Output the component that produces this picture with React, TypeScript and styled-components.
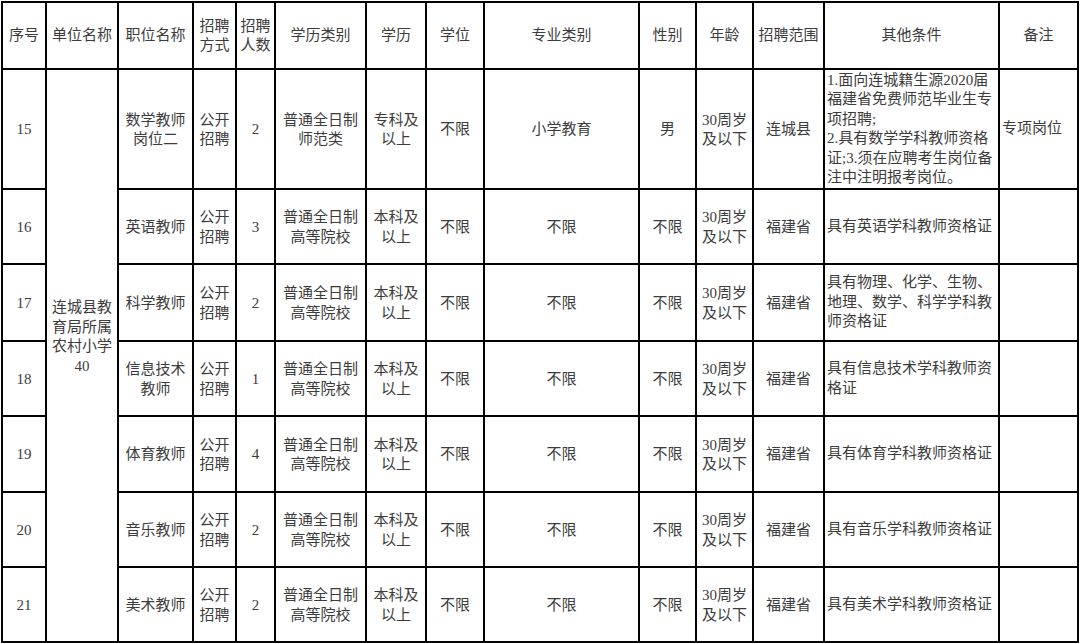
import React from 'react';
import styled, { createGlobalStyle } from 'styled-components';

const Global = createGlobalStyle`
  html, body { margin: 0; padding: 0; background: #ffffff; }
  body { font-family: "Liberation Serif", "Noto Sans CJK SC", serif; }
`;

const Table = styled.table`
  border-collapse: collapse;
  table-layout: fixed;
  width: 1077px;
  margin: 1px 0 0 1px;
  font-family: "Liberation Serif", "Noto Sans CJK SC", serif;
  font-size: 15px;
  line-height: 19.5px;
  color: #3c3c3c;
`;

const Col = styled.col<{ $w: number }>`
  width: ${(p) => p.$w}px;
`;

const Row = styled.tr<{ $h: number }>`
  height: ${(p) => p.$h}px;
`;

const HeadCell = styled.th`
  border: 2px solid #000;
  padding: 1px 1px 0;
  font-weight: normal;
  text-align: center;
  vertical-align: middle;
  white-space: nowrap;
`;

const Cell = styled.td<{ $left?: boolean }>`
  border: 2px solid #000;
  padding: ${(p) => (p.$left ? '0 2px' : '2px 1px 0')};
  text-align: ${(p) => (p.$left ? 'left' : 'center')};
  vertical-align: middle;
  white-space: nowrap;
`;

const UnitCell = styled(Cell)`
  padding-bottom: 39px;
`;

const cols = [44, 72, 75, 43, 39, 91, 60, 58, 155, 57, 57, 71, 175, 79];

const headers: string[][] = [
  ['序号'],
  ['单位名称'],
  ['职位名称'],
  ['招聘', '方式'],
  ['招聘', '人数'],
  ['学历类别'],
  ['学历'],
  ['学位'],
  ['专业类别'],
  ['性别'],
  ['年龄'],
  ['招聘范围'],
  ['其他条件'],
  ['备注'],
];

type RowData = {
  no: string;
  h: number;
  job: string[];
  count: string;
  eduType: string[];
  edu: string[];
  major: string;
  sex: string;
  scope: string;
  other: string[];
  note: string;
};

const rows: RowData[] = [
  {
    no: '15', h: 120, job: ['数学教师', '岗位二'], count: '2', eduType: ['普通全日制', '师范类'],
    edu: ['专科及', '以上'], major: '小学教育', sex: '男', scope: '连城县',
    other: ['1.面向连城籍生源2020届', '福建省免费师范毕业生专', '项招聘;', '2.具有数学学科教师资格', '证;3.须在应聘考生岗位备', '注中注明报考岗位。'],
    note: '专项岗位',
  },
  {
    no: '16', h: 75, job: ['英语教师'], count: '3', eduType: ['普通全日制', '高等院校'],
    edu: ['本科及', '以上'], major: '不限', sex: '不限', scope: '福建省',
    other: ['具有英语学科教师资格证'], note: '',
  },
  {
    no: '17', h: 77, job: ['科学教师'], count: '2', eduType: ['普通全日制', '高等院校'],
    edu: ['本科及', '以上'], major: '不限', sex: '不限', scope: '福建省',
    other: ['具有物理、化学、生物、', '地理、数学、科学学科教', '师资格证'], note: '',
  },
  {
    no: '18', h: 75, job: ['信息技术', '教师'], count: '1', eduType: ['普通全日制', '高等院校'],
    edu: ['本科及', '以上'], major: '不限', sex: '不限', scope: '福建省',
    other: ['具有信息技术学科教师资', '格证'], note: '',
  },
  {
    no: '19', h: 76, job: ['体育教师'], count: '4', eduType: ['普通全日制', '高等院校'],
    edu: ['本科及', '以上'], major: '不限', sex: '不限', scope: '福建省',
    other: ['具有体育学科教师资格证'], note: '',
  },
  {
    no: '20', h: 75, job: ['音乐教师'], count: '2', eduType: ['普通全日制', '高等院校'],
    edu: ['本科及', '以上'], major: '不限', sex: '不限', scope: '福建省',
    other: ['具有音乐学科教师资格证'], note: '',
  },
  {
    no: '21', h: 75, job: ['美术教师'], count: '2', eduType: ['普通全日制', '高等院校'],
    edu: ['本科及', '以上'], major: '不限', sex: '不限', scope: '福建省',
    other: ['具有美术学科教师资格证'], note: '',
  },
];

const Lines: React.FC<{ lines: string[] }> = ({ lines }) => (
  <>
    {lines.map((l, i) => (
      <React.Fragment key={i}>
        {i > 0 && <br />}
        {l}
      </React.Fragment>
    ))}
  </>
);

export default function App() {
  return (
    <>
      <Global />
      <Table>
        <colgroup>
          {cols.map((w, i) => (
            <Col key={i} $w={w} />
          ))}
        </colgroup>
        <thead>
          <Row $h={67}>
            {headers.map((h, i) => (
              <HeadCell key={i}>
                <Lines lines={h} />
              </HeadCell>
            ))}
          </Row>
        </thead>
        <tbody>
          {rows.map((r, i) => (
            <Row key={r.no} $h={r.h}>
              <Cell>{r.no}</Cell>
              {i === 0 && (
                <UnitCell rowSpan={rows.length}>
                  <Lines lines={['连城县教', '育局所属', '农村小学', '40']} />
                </UnitCell>
              )}
              <Cell><Lines lines={r.job} /></Cell>
              <Cell><Lines lines={['公开', '招聘']} /></Cell>
              <Cell>{r.count}</Cell>
              <Cell><Lines lines={r.eduType} /></Cell>
              <Cell><Lines lines={r.edu} /></Cell>
              <Cell>不限</Cell>
              <Cell>{r.major}</Cell>
              <Cell>{r.sex}</Cell>
              <Cell><Lines lines={['30周岁', '及以下']} /></Cell>
              <Cell>{r.scope}</Cell>
              <Cell $left><Lines lines={r.other} /></Cell>
              <Cell $left>{r.note}</Cell>
            </Row>
          ))}
        </tbody>
      </Table>
    </>
  );
}
